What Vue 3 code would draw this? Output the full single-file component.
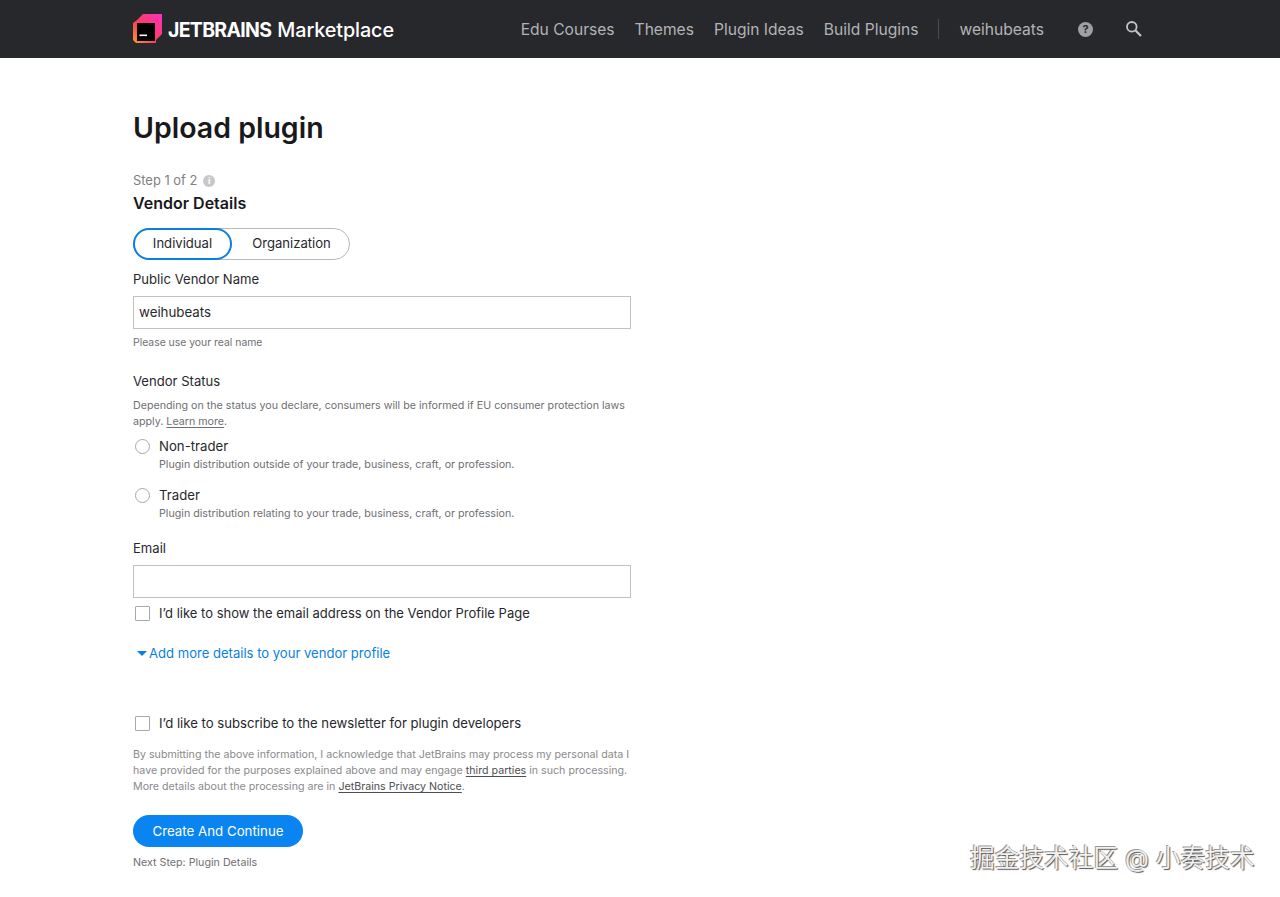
<template>
  <div class="page">
    <header class="top-bar">
      <div class="top-inner">
        <a class="logo">
          <svg width="30" height="30" viewBox="0 0 30 30">
            <defs>
              <linearGradient id="jb" x1="0" y1="1" x2="1" y2="0">
                <stop offset="0" stop-color="#ff9a2a" />
                <stop offset="0.4" stop-color="#f8405a" />
                <stop offset="1" stop-color="#ff2fc0" />
              </linearGradient>
            </defs>
            <path d="M4 6L10 0H29V20L23 26V29H3L0 26V9Z" fill="url(#jb)" />
            <rect x="4" y="9" width="18" height="18" fill="#000" />
            <rect x="6.5" y="20.5" width="7.5" height="1.6" fill="#fff" />
          </svg>
          <span class="logo-jb">JETBRAINS</span>
          <span class="logo-mp">Marketplace</span>
        </a>
        <nav class="top-nav">
          <a>Edu Courses</a>
          <a>Themes</a>
          <a>Plugin Ideas</a>
          <a>Build Plugins</a>
          <span class="nav-sep"></span>
          <a>weihubeats</a>
          <span class="help">?</span>
          <svg class="search" width="18" height="18" viewBox="0 0 18 18" fill="none" stroke="#c4c4c6">
            <circle cx="6.8" cy="6.8" r="4.8" stroke-width="1.8" />
            <path d="M10.5 10.5L16 16" stroke-width="2.2" />
          </svg>
        </nav>
      </div>
    </header>

    <main class="content">
      <h1>Upload plugin</h1>
      <div class="step">
        Step 1 of 2
        <span class="info">i</span>
      </div>
      <h2>Vendor Details</h2>

      <div class="switcher">
        <span class="opt active">Individual</span>
        <span class="opt">Organization</span>
      </div>

      <label class="label name-label">Public Vendor Name</label>
      <div class="input">weihubeats</div>
      <p class="hint real-name">Please use your real name</p>

      <label class="label status-label">Vendor Status</label>
      <p class="hint status-text">
        Depending on the status you declare, consumers will be informed if EU consumer protection laws<br />
        apply. <a class="u">Learn more</a>.
      </p>

      <div class="radio-row" v-for="r in radios" :key="r.title">
        <span class="radio"></span>
        <div>
          <div class="radio-title">{{ r.title }}</div>
          <div class="hint radio-text">{{ r.text }}</div>
        </div>
      </div>

      <label class="label email-label">Email</label>
      <div class="input"></div>
      <div class="check-row show-email">
        <span class="box"></span>
        <span>I’d like to show the email address on the Vendor Profile Page</span>
      </div>

      <a class="more">
        <span class="caret"></span>
        Add more details to your vendor profile
      </a>

      <div class="check-row newsletter">
        <span class="box"></span>
        <span>I’d like to subscribe to the newsletter for plugin developers</span>
      </div>

      <p class="legal">
        By submitting the above information, I acknowledge that JetBrains may process my personal data I<br />
        have provided for the purposes explained above and may engage <a class="u dark">third parties</a> in such processing.<br />
        More details about the processing are in <a class="u dark">JetBrains Privacy Notice</a>.
      </p>

      <button class="submit">Create And Continue</button>
      <p class="hint next">Next Step: Plugin Details</p>
    </main>

    <div class="watermark">掘金技术社区 @ 小奏技术</div>
  </div>
</template>

<script setup>
const radios = [
  { title: 'Non-trader', text: 'Plugin distribution outside of your trade, business, craft, or profession.' },
  { title: 'Trader', text: 'Plugin distribution relating to your trade, business, craft, or profession.' }
]
</script>

<style>
html, body { background: #fff; }
</style>

<style scoped>
.page {
  position: relative;
  height: 897px;
  overflow: hidden;
  font-family: Inter, "Noto Sans CJK SC", sans-serif;
  color: #27282c;
}

.top-bar {
  height: 58px;
  background: #27282c;
}
.top-inner {
  width: 1014px;
  margin-left: 133px;
  height: 58px;
  display: flex;
  align-items: center;
  justify-content: space-between;
}
.logo {
  display: flex;
  align-items: center;
  color: #fff;
}
.logo-jb {
  margin-left: 5px;
  font-size: 19.5px;
  font-weight: 700;
  letter-spacing: -0.7px;
  position: relative;
  top: 1px;
}
.logo-mp {
  margin-left: 6px;
  font-size: 19.8px;
  font-weight: 500;
  letter-spacing: -0.1px;
  position: relative;
  top: 1px;
}
.top-nav {
  display: flex;
  align-items: center;
  font-size: 15.6px;
  color: #b3b3b5;
}
.top-nav a { margin-right: 20px; }
.nav-sep {
  width: 1px;
  height: 20px;
  background: #4b4c50;
  margin-right: 20px;
}
.help {
  width: 15px;
  height: 15px;
  border-radius: 50%;
  background: #a0a0a2;
  color: #27282c;
  font-size: 11px;
  font-weight: 700;
  line-height: 15px;
  text-align: center;
  margin-left: 14px;
}
.search { margin-left: 32px; margin-right: 4px; }

.content {
  width: 498px;
  margin-left: 133px;
}
h1 {
  margin: 51px 0 0;
  font-size: 28.5px;
  line-height: 38px;
  font-weight: 600;
  color: #19191c;
}
.step {
  margin-top: 24px;
  font-size: 12.9px;
  line-height: 20px;
  color: #808083;
  display: flex;
  align-items: center;
}
.info {
  width: 12px;
  height: 12px;
  margin-left: 6px;
  border-radius: 50%;
  background: #c8c8c9;
  color: #fff;
  font-size: 9px;
  font-weight: 700;
  line-height: 12px;
  text-align: center;
}
h2 {
  margin: 2px 0 0;
  font-size: 16px;
  line-height: 20px;
  font-weight: 600;
  color: #19191c;
}
.switcher {
  margin-top: 15px;
  width: 217px;
  height: 32px;
  box-sizing: border-box;
  border: 1px solid #b8b8ba;
  border-radius: 16px;
  display: flex;
  align-items: center;
  position: relative;
  font-size: 13.1px;
}
.opt {
  height: 32px;
  line-height: 30px;
  box-sizing: border-box;
  text-align: center;
}
.opt.active {
  width: 99px;
  margin: 0 0 0 -1px;
  border: 2px solid #0b7fe0;
  border-radius: 16px;
  line-height: 26px;
}
.opt:not(.active) { flex: 1; padding-left: 2px; }

.label {
  display: block;
  font-size: 13.1px;
  line-height: 20px;
}
.name-label { margin-top: 9px; }
.input {
  margin-top: 7px;
  height: 33px;
  box-sizing: border-box;
  border: 1px solid #c2c2c4;
  padding: 0 5px;
  font-size: 13.3px;
  line-height: 30px;
}
.hint {
  margin: 0;
  font-size: 10.7px;
  line-height: 16px;
  color: #6f6f72;
}
.real-name { margin-top: 6px; font-size: 10.4px; }
.status-label { margin-top: 20px; }
.status-text { margin-top: 7px; white-space: nowrap; }
.u { text-decoration: underline; text-underline-offset: 2px; text-decoration-thickness: 1px; }

.radio-row {
  display: flex;
  gap: 9px;
  margin-top: 6px;
  height: 42px;
  padding-left: 2px;
}
.radio-row + .radio-row { margin-top: 7px; }
.radio {
  width: 15px;
  height: 15px;
  margin-top: 3px;
  box-sizing: border-box;
  border: 1px solid #a8a8aa;
  border-radius: 50%;
}
.radio-title {
  font-size: 13.2px;
  line-height: 20px;
}
.radio-text { margin-top: 1px; }

.email-label { margin-top: 11px; }

.check-row {
  display: flex;
  align-items: center;
  gap: 9px;
  padding-left: 2px;
  font-size: 13px;
  line-height: 20px;
}
.show-email { margin-top: 5px; }
.box {
  width: 15px;
  height: 15px;
  box-sizing: border-box;
  border: 1px solid #a8a8aa;
  border-radius: 1px;
}
.more {
  display: flex;
  align-items: center;
  margin-top: 20px;
  padding-left: 4px;
  font-size: 13.07px;
  line-height: 20px;
  color: #0b7fe0;
}
.caret {
  width: 0;
  height: 0;
  margin-right: 2px;
  border-left: 5px solid transparent;
  border-right: 5px solid transparent;
  border-top: 5px solid #0b7fe0;
}
.newsletter { margin-top: 50px; font-size: 13.15px; }
.legal {
  margin: 14px 0 0;
  font-size: 10.66px;
  line-height: 16px;
  color: #8a8a8d;
  white-space: nowrap;
}
.legal .dark { color: #4d4e52; }
.submit {
  display: block;
  margin-top: 20px;
  width: 170px;
  height: 32px;
  border: 0;
  border-radius: 16px;
  background: #0a84f0;
  color: #fff;
  font-family: inherit;
  font-size: 13.3px;
}
.next { margin-top: 8px; }

.watermark {
  position: absolute;
  left: 970px;
  top: 843px;
  font-size: 24.7px;
  line-height: 30px;
  color: #f0f0f0;
  text-shadow: 1px 1px 1px #555, -1px -1px 0 #999;
  white-space: nowrap;
}
</style>
